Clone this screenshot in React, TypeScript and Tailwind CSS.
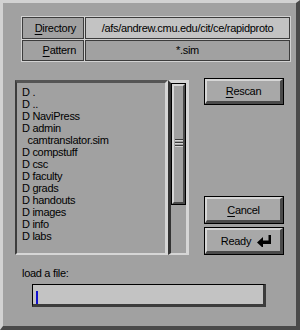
import { ReactNode } from 'react';

const entries = [
  'D .',
  'D ..',
  'D NaviPress',
  'D admin',
  '  camtranslator.sim',
  'D compstuff',
  'D csc',
  'D faculty',
  'D grads',
  'D handouts',
  'D images',
  'D info',
  'D labs',
];

function MotifButton({ children, className = '' }: { children: ReactNode; className?: string }) {
  return (
    <div className={`w-[80px] border border-black bg-black ${className}`}>
      <div className="flex h-full items-center justify-center border-t-2 border-l-2 border-r-[3px] border-b-[3px] border-t-[#d6d6d6] border-l-[#d6d6d6] border-r-[#4a4a4a] border-b-[#4a4a4a] bg-[#a8a8a8]">
        {children}
      </div>
    </div>
  );
}

function Ul({ children }: { children: string }) {
  return <span className="underline underline-offset-2">{children}</span>;
}

export default function App() {
  return (
    <div
      className="box-border h-[330px] w-[300px] border-t-[3px] border-l-[3px] border-r-4 border-b-4 border-t-[#d2d2d2] border-l-[#d2d2d2] border-r-[#4a4a4a] border-b-[#4a4a4a] bg-[#a1a1a1] text-[11px] leading-[12px] tracking-[-0.3px] text-black"
      style={{ fontFamily: '"Liberation Sans", Arial, sans-serif' }}
    >
      {/* path / pattern table */}
      <div className="ml-[18px] mt-[13px] grid h-[46px] w-[270px] grid-cols-[62px_1fr] grid-rows-2 gap-px bg-[#d2d2d2] p-px">
        <div className="flex items-center justify-end border border-[#3c3c3c] bg-[#a1a1a1] pr-[7px]">
          <Ul>D</Ul>irectory
        </div>
        <div className="flex items-center justify-center border border-[#3c3c3c] bg-[#c3c3c3]">
          /afs/andrew.cmu.edu/cit/ce/rapidproto
        </div>
        <div className="flex items-center justify-end border border-[#3c3c3c] bg-[#a1a1a1] pr-[7px]">
          <Ul>P</Ul>attern
        </div>
        <div className="flex items-center justify-center border border-[#3c3c3c] bg-[#a1a1a1]">*.sim</div>
      </div>

      <div className="mt-[16px] flex items-start">
        {/* file list with scrollbar */}
        <div className="ml-[12px] mt-[2px] flex h-[175px] w-[174px]">
          <div className="flex-1 border-t-[3px] border-l-2 border-r-[3px] border-b-2 border-t-[#555555] border-l-[#3c3c3c] border-r-[#d6d6d6] border-b-[#d6d6d6] pl-[5px] pt-[3px]">
            {entries.map((e, i) => (
              <div key={i} className="h-[12px] whitespace-pre">
                {e}
              </div>
            ))}
          </div>
          <div className="flex w-[21px] flex-col border-t-[3px] border-l-[3px] border-r-[3px] border-b-2 border-t-[#d6d6d6] border-l-[#333333] border-r-[#d6d6d6] border-b-[#d6d6d6]">
            <div className="h-[122px] border border-black">
              <div className="flex h-full flex-col items-center justify-center gap-[1px] border-t-2 border-l-2 border-r-2 border-b-2 border-t-[#d6d6d6] border-l-[#d6d6d6] border-r-[#4a4a4a] border-b-[#4a4a4a] bg-[#a1a1a1] pb-[2px]">
                {[0, 1, 2].map((i) => (
                  <div key={i} className="w-[8px] border-t border-b border-t-[#3c3c3c] border-b-[#d6d6d6]" />
                ))}
              </div>
            </div>
          </div>
        </div>

        {/* buttons */}
        <div className="ml-[15px] flex h-[177px] flex-col justify-between">
          <MotifButton className="h-[27px]">
            <span>
              <Ul>R</Ul>escan
            </span>
          </MotifButton>
          <div className="flex flex-col gap-[3px]">
            <MotifButton className="h-[28px]">
              <span>
                <Ul>C</Ul>ancel
              </span>
            </MotifButton>
            <MotifButton className="h-[28px]">
              <span className="ml-[6px]">Ready</span>
              <svg width="15" height="12" viewBox="0 0 15 12" className="ml-[6px]">
                <polygon points="0,7.5 6,2 6,5.5 11.5,5.5 11.5,0 14,0 14,9 6,9 6,13" fill="#000" />
              </svg>
            </MotifButton>
          </div>
        </div>
      </div>

      <div className="ml-[19px] mt-[12px]">load a file:</div>

      <div className="ml-[29px] mt-[5px] h-[23px] w-[234px] border-t border-l border-r-[3px] border-b-[3px] border-t-black border-l-black border-r-[#3c3c3c] border-b-[#3c3c3c] bg-[#c3c3c3] pl-[3px] pt-[6px]">
        <div className="h-[13px] w-[2px] bg-[#1010d0]" />
      </div>
    </div>
  );
}
